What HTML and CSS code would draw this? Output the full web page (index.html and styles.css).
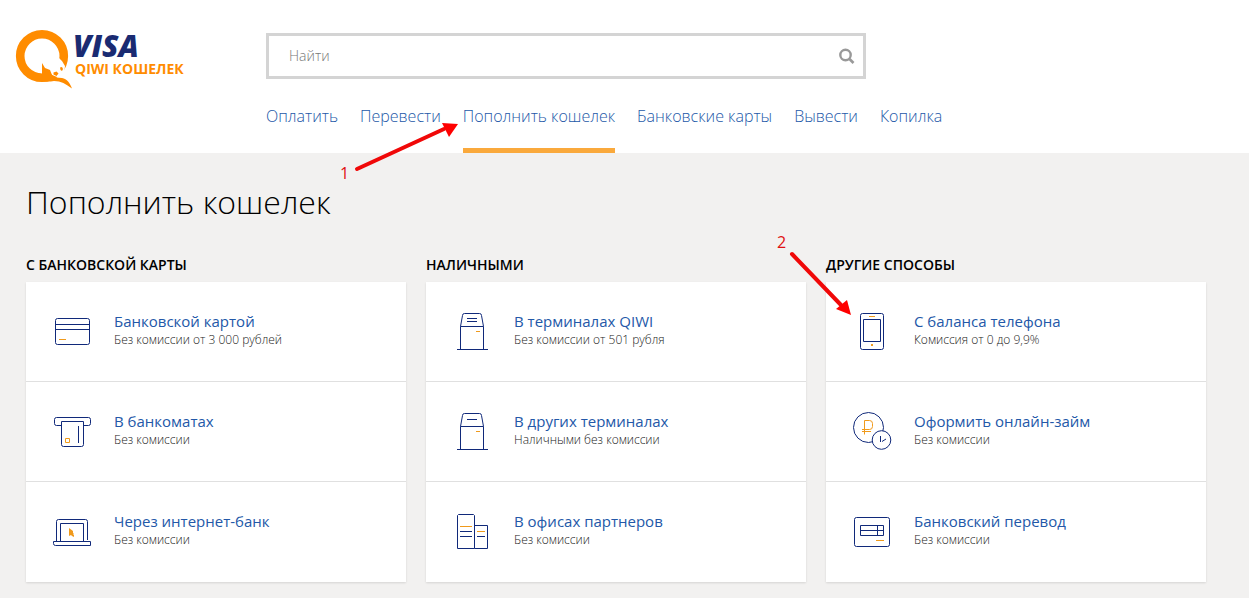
FILE: index.html
```html
<!DOCTYPE html>
<html lang="ru">
<head>
<meta charset="utf-8">
<meta name="viewport" content="width=device-width, initial-scale=1">
<title>Пополнить кошелек</title>
<link rel="stylesheet" href="styles.css">
</head>
<body>
<header class="header">
  <a class="logo" href="#">
    <svg class="logo-mark" viewBox="0 0 58 62" width="58" height="62" aria-hidden="true">
      <circle cx="27" cy="28" r="21.800" fill="none" stroke="#ff8c00" stroke-width="8.600"/>
      <path d="M29 38L34 35 40 34 38.500 30.500 44 30 47 33 50 38 49 46 57 45 57 54 48 50 42 49 37 47Z" fill="#fff"/>
      <path d="M27 35L30 40 35 42 37 47 41 49.500 47 50C52 51 55 55 57 60.500C51 56 46 53 39 53Q33 54 24 53L20 45 27 46Z" fill="#ff8c00"/>
      <path d="M38.500 44.500l3-1 2 2-2 2.500-3-1.500zM45 39.500l2-.5 1 2-1 2-1.500-1z" fill="#ff8c00"/>
    </svg>
    <span class="logo-text">
      <span class="logo-visa">VISA</span>
      <span class="logo-name">QIWI КОШЕЛЕК</span>
    </span>
  </a>
  <div class="header-main">
    <form class="search" role="search">
      <input class="search-input" type="search" placeholder="Найти" aria-label="Найти">
      <button class="search-button" type="submit" aria-label="Искать">
        <svg viewBox="0 0 16 16" width="16" height="16" fill="none" stroke="#999"><circle cx="6.500" cy="7" r="5.200" stroke-width="2.400"/><path d="M10.500 11L14.500 15" stroke-width="2.600"/></svg>
      </button>
    </form>
    <nav class="nav">
      <a class="nav-link" href="#">Оплатить</a>
      <a class="nav-link" href="#">Перевести</a>
      <a class="nav-link nav-link-active" href="#">Пополнить кошелек
        <svg class="mark mark-first" viewBox="0 0 124 66" width="124" height="66">
          <path d="M16 53L103 13" stroke="#f00808" stroke-width="4" stroke-linecap="round"/>
          <path d="M117 8L101 7L108 21Z" fill="#f00"/>
          <text x="-1" y="63">1</text>
        </svg>
      </a>
      <a class="nav-link" href="#">Банковские карты</a>
      <a class="nav-link" href="#">Вывести</a>
      <a class="nav-link" href="#">Копилка</a>
    </nav>
  </div>
</header>

<main class="main">
  <h1 class="title">Пополнить кошелек</h1>
  <div class="columns">
    <section class="column">
      <h2 class="column-title">С банковской карты</h2>
      <div class="card">
        <a class="item" href="#">
          <svg class="icon" viewBox="0 0 40 40"><rect x="3.500" y="7.500" width="34" height="26" rx="2"/><path d="M3.500 13.500h34M3.500 18.500h34"/><path class="accent" d="M7 28.500h7"/></svg>
          <span class="item-text"><span class="item-name">Банковской картой</span><span class="item-note">Без комиссии от 3 000 рублей</span></span>
        </a>
        <a class="item" href="#">
          <svg class="icon" viewBox="0 0 40 40"><path d="M9.500 14.500H4.500a2 2 0 0 1-2-2V8.500a2 2 0 0 1 2-2H36.500a2 2 0 0 1 2 2V12.500a2 2 0 0 1-2 2H31.500"/><path d="M9.500 10.500H31.500V33.500a2 2 0 0 1-2 2H11.500a2 2 0 0 1-2-2ZM26.500 15V32"/><path class="accent" d="M13.500 27.500h4v4h-4z"/></svg>
          <span class="item-text"><span class="item-name">В банкоматах</span><span class="item-note">Без комиссии</span></span>
        </a>
        <a class="item" href="#">
          <svg class="icon" viewBox="0 0 40 40"><path d="M4.500 30V10.500a2 2 0 0 1 2-2H33.500a2 2 0 0 1 2 2V29M8.500 30V12.500H31.500V30M1.500 30.500H38.500V34.500H3.500a2 2 0 0 1-2-2Z"/><path class="accent-fill" d="M17 17l4 3v2l1 1-1 1h1v2l-2-1-1-1-2 1z"/></svg>
          <span class="item-text"><span class="item-name">Через интернет-банк</span><span class="item-note">Без комиссии</span></span>
        </a>
      </div>
    </section>
    <section class="column">
      <h2 class="column-title">Наличными</h2>
      <div class="card">
        <a class="item" href="#">
          <svg class="icon" viewBox="0 0 40 40"><path d="M8.500 38.500V15.500L10.500 4.500a2 2 0 0 1 2-2H27.500a2 2 0 0 1 2 2L31.500 15.500V38.500M8.500 15.500h23M5 38.500H36M15 7.500h10M15 10.500h10"/><path class="accent" d="M24 20.500h4"/></svg>
          <span class="item-text"><span class="item-name">В терминалах QIWI</span><span class="item-note">Без комиссии от 501 рубля</span></span>
        </a>
        <a class="item" href="#">
          <svg class="icon" viewBox="0 0 40 40"><path d="M8.500 38.500V15.500L10.500 4.500a2 2 0 0 1 2-2H27.500a2 2 0 0 1 2 2L31.500 15.500V38.500M8.500 15.500h23M5 38.500H36M15 8.500h10"/><path class="accent" d="M24 20.500h4"/></svg>
          <span class="item-text"><span class="item-name">В других терминалах</span><span class="item-note">Наличными без комиссии</span></span>
        </a>
        <a class="item" href="#">
          <svg class="icon" viewBox="0 0 40 40"><path d="M5.500 37.500V4.500l1-1H21.500l1 1V37.500ZM22.500 14.500H35.500V37.500H22.500M8 20.500h12M8 25.500h12M25 25.500h8"/><path class="accent" d="M8 15.500h12M25 20.500h8"/></svg>
          <span class="item-text"><span class="item-name">В офисах партнеров</span><span class="item-note">Без комиссии</span></span>
        </a>
      </div>
    </section>
    <section class="column">
      <h2 class="column-title">Другие способы</h2>
      <svg class="mark mark-second" viewBox="0 0 76 84" width="76" height="84">
        <path d="M15 19L64 70" stroke="#f00808" stroke-width="4" stroke-linecap="round"/>
        <path d="M74 80L59 74L70 65Z" fill="#f00"/>
        <text x="0" y="13">2</text>
      </svg>
      <div class="card">
        <a class="item" href="#">
          <svg class="icon" viewBox="0 0 40 40"><rect x="8.500" y="2.500" width="23" height="36" rx="2"/><path d="M11.500 8.500h17v22h-17z"/><path class="accent" d="M17 5.500h6"/><path class="accent-fill" d="M19 33h2v2h-2z"/></svg>
          <span class="item-text"><span class="item-name">С баланса телефона</span><span class="item-note">Комиссия от 0 до 9,9%</span></span>
        </a>
        <a class="item" href="#">
          <svg class="icon" viewBox="0 0 40 40"><circle cx="16.500" cy="16.500" r="15"/><circle class="over" cx="29.500" cy="29" r="9.300"/><path d="M28.500 25v6M30 30.500l4-2.500"/><path class="accent" d="M12.500 23.500V9.500H17.500a3 3 0 0 1 3 3V15.500a3 3 0 0 1-3 3H10M10 20.500h9"/></svg>
          <span class="item-text"><span class="item-name">Оформить онлайн-займ</span><span class="item-note">Без комиссии</span></span>
        </a>
        <a class="item" href="#">
          <svg class="icon" viewBox="0 0 40 40"><rect x="2.500" y="6.500" width="35" height="29" rx="2"/><path d="M8.500 14.500h23v10h-23zM8.500 19.500h23M25.500 14.500v10"/><path class="accent" d="M24 29.500h8"/></svg>
          <span class="item-text"><span class="item-name">Банковский перевод</span><span class="item-note">Без комиссии</span></span>
        </a>
      </div>
    </section>
  </div>
</main>
</body>
</html>
```

FILE: styles.css
```css
* {
  box-sizing: border-box;
}

body {
  margin: 0;
  min-height: 100vh;
  background: #f2f1f0;
  color: #000;
  font-family: "Open Sans", "Noto Sans", sans-serif;
}

a {
  color: #2358a8;
  text-decoration: none;
}

.header {
  display: flex;
  align-items: flex-start;
  gap: 82px;
  padding: 28px 43px 0 15px;
  background: #fff;
}

.logo {
  display: flex;
  width: 169px;
  flex-shrink: 0;
}

.logo-mark {
  flex-shrink: 0;
}

.logo-text {
  display: flex;
  flex-direction: column;
  padding-top: 3px;
  font-weight: 700;
  white-space: nowrap;
}

.logo-visa {
  color: #1a2b72;
  font-size: 30px;
  font-style: italic;
  font-weight: 800;
  line-height: 30px;
}

.logo-name {
  padding-left: 2px;
  color: #ff8c00;
  font-size: 14px;
  line-height: 16px;
}

.header-main {
  flex: 1;
  padding-top: 5px;
}

.search {
  display: flex;
  max-width: 600px;
  height: 46px;
  border: 3px solid #d4d4d4;
}

.search-input {
  flex: 1;
  min-width: 0;
  padding: 0 20px 2px;
  border: 0;
  outline: 0;
  background: none;
  font: 300 14px "Open Sans", "Noto Sans", sans-serif;
}

.search-input::placeholder {
  color: #777;
  opacity: 1;
}

.search-button {
  display: flex;
  align-items: center;
  padding: 0 8px;
  border: 0;
  background: none;
}

.nav {
  display: flex;
  gap: 22px;
  padding-top: 24px;
}

.nav-link {
  position: relative;
  height: 50px;
  border-bottom: 5px solid transparent;
  font-size: 16px;
  font-weight: 300;
  line-height: 26px;
  white-space: nowrap;
}

.nav-link-active {
  border-bottom-color: #faa93c;
}

.mark {
  position: absolute;
  z-index: 1;
  overflow: visible;
  font-size: 16px;
  font-weight: 400;
}

.mark text {
  fill: #e01010;
}

.mark-first {
  top: 13px;
  left: -122px;
}

.mark-second {
  top: -18px;
  left: -49px;
}

.main {
  padding: 27px 43px 16px 26px;
}

.title {
  margin: 0;
  font-size: 32px;
  font-weight: 300;
  line-height: 44px;
}

.columns {
  display: grid;
  grid-template-columns: repeat(3, 1fr);
  gap: 20px;
  padding-top: 29px;
}

.column {
  position: relative;
}

.column-title {
  margin: 0;
  padding-bottom: 5px;
  font-size: 14px;
  font-weight: 600;
  line-height: 24px;
  text-transform: uppercase;
}

.card {
  background: #fff;
  box-shadow: 0 1px 2px rgba(0, 0, 0, 0.12);
}

.item {
  display: flex;
  align-items: center;
  gap: 22px;
  height: 100px;
  padding: 0 26px 2px;
  border-bottom: 1px solid #e0e0e0;
}

.item:last-child {
  border-bottom-color: transparent;
}

.icon {
  width: 40px;
  height: 40px;
  flex-shrink: 0;
  fill: none;
  stroke: #10297a;
}

.icon .accent {
  stroke: #f09a1c;
}

.icon .accent-fill {
  fill: #f09a1c;
  stroke: none;
}

.icon .over {
  fill: #fff;
}

.item-text {
  display: flex;
  flex-direction: column;
  gap: 1px;
  padding-bottom: 1px;
}

.item-name {
  font-size: 15px;
  line-height: 18px;
}

.item-note {
  color: #222;
  font-size: 12px;
  font-weight: 300;
  line-height: 18px;
}
```
